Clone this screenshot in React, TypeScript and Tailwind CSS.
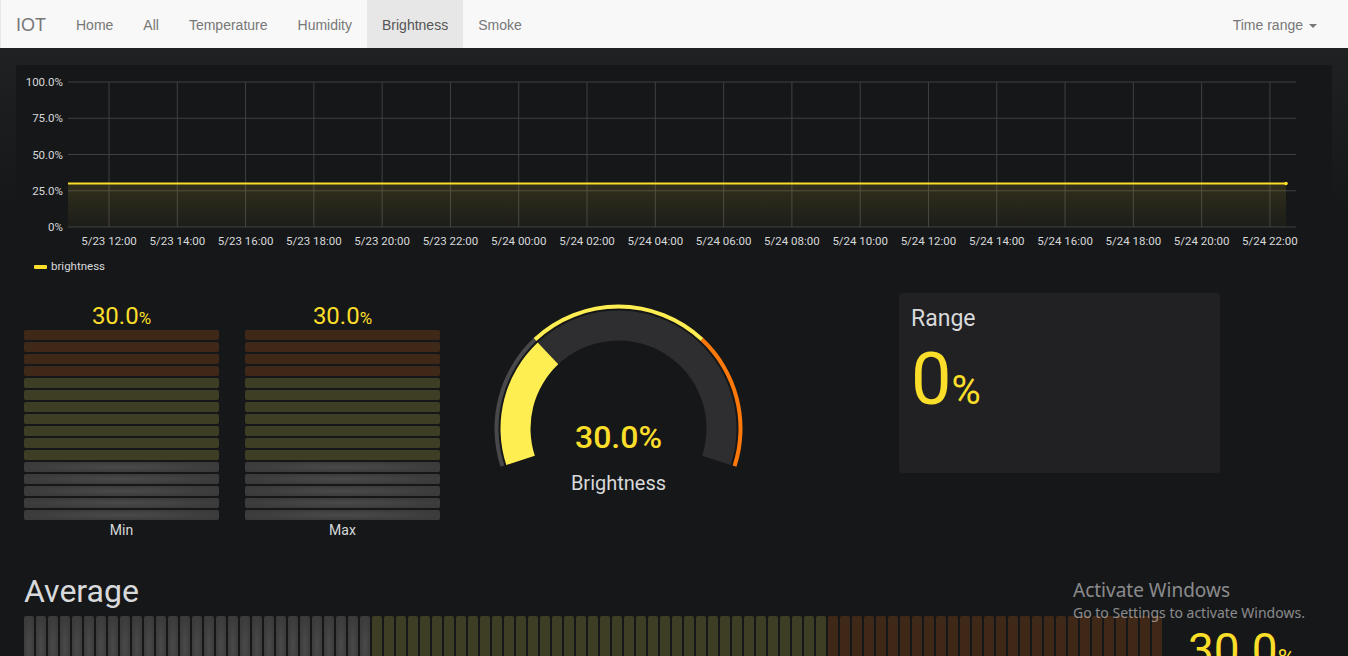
import React from "react";

const ROBOTO = { fontFamily: "Roboto, 'Noto Sans', sans-serif" };

const navLinks = ["Home", "All", "Temperature", "Humidity", "Brightness", "Smoke"];

const timeLabels = [
  "5/23 12:00", "5/23 14:00", "5/23 16:00", "5/23 18:00", "5/23 20:00", "5/23 22:00",
  "5/24 00:00", "5/24 02:00", "5/24 04:00", "5/24 06:00", "5/24 08:00", "5/24 10:00",
  "5/24 12:00", "5/24 14:00", "5/24 16:00", "5/24 18:00", "5/24 20:00", "5/24 22:00",
];

const yTicks = [
  { label: "100.0%", v: 100 },
  { label: "75.0%", v: 75 },
  { label: "50.0%", v: 50 },
  { label: "25.0%", v: 25 },
  { label: "0%", v: 0 },
];

function Navbar() {
  return (
    <div
      className="flex h-[48px] items-stretch border-l border-[#e7e7e7] bg-[#f8f8f8] text-[14px] text-[#777]"
      style={{ fontFamily: "'Liberation Sans', Arial, sans-serif" }}
    >
      <div className="flex items-center px-[15px] pt-[2px] text-[18px]">IOT</div>
      {navLinks.map((l) => (
        <div
          key={l}
          className={
            l === "Brightness"
              ? "flex items-center bg-[#e7e7e7] px-[15px] pt-[2px] text-[#555]"
              : "flex items-center px-[15px] pt-[2px]"
          }
        >
          {l}
        </div>
      ))}
      <div className="ml-auto mr-[16px] flex items-center gap-[6px] px-[15px] pt-[2px]">
        Time range
        <span className="mt-[1px] h-0 w-0 border-x-[4px] border-t-[4px] border-x-transparent border-t-[#777]" />
      </div>
    </div>
  );
}

function TimeChart() {
  const top = 17;
  const bottom = 162;
  const left = 52;
  const right = 1280;
  const yOf = (v: number) => bottom - (v / 100) * (bottom - top);
  const lineY = yOf(30);
  return (
    <div className="rounded-[3px] bg-[#161719] pb-[4px]" style={ROBOTO}>
      <svg width="1316" height="190" className="block">
        <defs>
          <linearGradient id="fill" x1="0" y1="0" x2="0" y2="1">
            <stop offset="0%" stopColor="#fade2a" stopOpacity="0.12" />
            <stop offset="100%" stopColor="#fade2a" stopOpacity="0.03" />
          </linearGradient>
        </defs>
        {yTicks.map((t) => (
          <g key={t.label}>
            <line x1={left} x2={right} y1={yOf(t.v)} y2={yOf(t.v)} stroke="#3f4042" strokeWidth="1" />
            <text x={47} y={yOf(t.v) + 4} textAnchor="end" fontSize="11.5" fill="#d8d9da">
              {t.label}
            </text>
          </g>
        ))}
        {timeLabels.map((l, i) => {
          const x = 93 + i * 68.29;
          return (
            <g key={l}>
              <line x1={x} x2={x} y1={top} y2={bottom} stroke="#3f4042" strokeWidth="1" />
              <text x={x} y={180} textAnchor="middle" fontSize="11.5" fill="#d8d9da">
                {l}
              </text>
            </g>
          );
        })}
        <rect x={left} y={lineY} width={1270 - left} height={bottom - lineY} fill="url(#fill)" />
        <line x1={left} x2={1270} y1={lineY} y2={lineY} stroke="#fade2a" strokeWidth="2" />
        <circle cx={1270} cy={lineY} r="1.8" fill="#fade2a" />
      </svg>
      <div className="flex h-[24px] items-center gap-[4px] pl-[18px] text-[11.5px] text-[#d8d9da]">
        <span className="h-[4px] w-[13px] rounded-[1px] bg-[#fade2a]" />
        brightness
      </div>
    </div>
  );
}

const vertRows: string[] = [
  ...Array(4).fill("brown"),
  ...Array(7).fill("olive"),
  ...Array(5).fill("grey"),
];

function cellClass(kind: string) {
  if (kind === "brown") return "bg-[#3f2817]";
  if (kind === "olive") return "bg-[#3e3e24]";
  return "bg-[radial-gradient(ellipse_at_center,#4a4a4b_0%,#3b3b3c_75%)]";
}

function VerticalGauge({ label }: { label: string }) {
  return (
    <div className="flex w-[195px] flex-col pt-[10px]" style={ROBOTO}>
      <div className="h-[26px] text-center text-[24px] leading-[26px] text-[#fade2a]">
        30.0<span className="text-[17px]">%</span>
      </div>
      <div className="mt-[1px] flex flex-col gap-[2px]">
        {vertRows.map((k, i) => (
          <div key={i} className={`h-[10px] rounded-[2px] ${cellClass(k)}`} />
        ))}
      </div>
      <div className="h-[20px] text-center text-[14px] leading-[20px] text-[#d8d9da]">{label}</div>
    </div>
  );
}

function Gauge() {
  const cx = 130.5;
  const cy = 135.5;
  const pt = (r: number, a: number) => {
    const rad = (a * Math.PI) / 180;
    return `${(cx + r * Math.cos(rad)).toFixed(2)} ${(cy - r * Math.sin(rad)).toFixed(2)}`;
  };
  const sector = (r1: number, r2: number, a0: number, a1: number) => {
    const large = a0 - a1 > 180 ? 1 : 0;
    return `M ${pt(r2, a0)} A ${r2} ${r2} 0 ${large} 1 ${pt(r2, a1)} L ${pt(r1, a1)} A ${r1} ${r1} 0 ${large} 0 ${pt(r1, a0)} Z`;
  };
  const start = 198;
  const span = 216;
  const at = (f: number) => start - f * span;
  return (
    <svg width="260" height="206" className="block" style={ROBOTO}>
      <path d={sector(88, 118, at(0.3), at(1))} fill="#2e2e31" />
      <path d={sector(88, 118, at(0), at(0.3))} fill="#ffee52" />
      <path d={sector(120, 124, at(0), at(0.3))} fill="#48484b" />
      <path d={sector(120, 124, at(0.3), at(0.7))} fill="#ffee52" />
      <path d={sector(120, 124, at(0.7), at(1))} fill="#ff780a" />
      <text x={cx} y={155} textAnchor="middle" fontSize="32" fontWeight="500" fill="#fade2a">
        30.0%
      </text>
      <text x={cx} y={197} textAnchor="middle" fontSize="20" fill="#d8d9da">
        Brightness
      </text>
    </svg>
  );
}

function RangePanel() {
  return (
    <div className="h-[180px] w-[321px] rounded-[3px] bg-[#212124] pl-[12px] pt-[14px]" style={ROBOTO}>
      <div className="text-[23px] leading-none text-[#d8d9da]">Range</div>
      <div className="mt-[14px] text-[72px] leading-none text-[#fade2a]">
        0<span className="text-[40px]">%</span>
      </div>
    </div>
  );
}

const avgCells: string[] = [
  ...Array(29).fill("grey"),
  ...Array(38).fill("olive"),
  ...Array(28).fill("brown"),
];

function AveragePanel() {
  return (
    <div className="mt-[32px] pl-[8px]" style={ROBOTO}>
      <div className="h-[44px] text-[32px] leading-[38px] text-[#d8d9da]">Average</div>
      <div className="flex items-start">
        <div className="flex gap-[2px]">
          {avgCells.map((k, i) => (
            <div key={i} className={`h-[60px] w-[10px] rounded-[2px] ${cellClass(k)}`} />
          ))}
        </div>
        <div className="ml-[26px] mt-[11px] whitespace-nowrap text-[46px] leading-none text-[#fade2a]">
          30.0<span className="text-[24px]">%</span>
        </div>
      </div>
    </div>
  );
}

export default function App() {
  return (
    <div className="relative h-[656px] w-[1348px] overflow-hidden bg-[#161719]">
      <Navbar />
      <div className="h-[608px] bg-[linear-gradient(180deg,#202123_0px,#1c1d1f_60px,#161719_160px)] px-4 pt-[17px]">
        <TimeChart />
        <div className="mt-[10px] flex items-start pl-[8px]">
          <VerticalGauge label="Min" />
          <div className="ml-[26px]">
            <VerticalGauge label="Max" />
          </div>
          <div className="ml-[48px]">
            <Gauge />
          </div>
          <div className="ml-[151px]">
            <RangePanel />
          </div>
        </div>
        <AveragePanel />
      </div>
      <div
        className="pointer-events-none absolute left-[1073px] top-[577px] text-white/50"
        style={{ fontFamily: "'Noto Sans', 'Open Sans', sans-serif" }}
      >
        <div className="text-[19px] leading-[26px]">Activate Windows</div>
        <div className="text-[14px] leading-[20px]">Go to Settings to activate Windows.</div>
      </div>
    </div>
  );
}
